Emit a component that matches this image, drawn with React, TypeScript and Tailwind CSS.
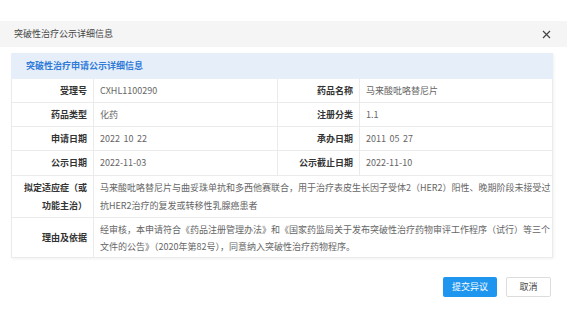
import React from "react";

const font = { fontFamily: '"Noto Sans CJK SC", "Noto Sans", sans-serif' };

function Label({ children }: { children: React.ReactNode }) {
  return (
    <div className="flex items-center justify-end pr-[6px] text-right font-semibold text-[#333] border-r border-[#ebebeb]">
      {children}
    </div>
  );
}

function Value({ children, border }: { children: React.ReactNode; border?: boolean }) {
  return (
    <div className={"flex items-center pl-[6px] text-[#666] [word-spacing:1.5px] " + (border ? "border-r border-[#ebebeb]" : "")}>
      {children}
    </div>
  );
}

export default function App() {
  return (
    <div className="w-[567px] h-[316px] bg-white pt-[21px] text-[9px]" style={font}>
      <div className="h-[26px] bg-[#f5f5f5] pl-[14px] pr-[16px] flex items-center justify-between">
        <span className="text-[#444] text-[9px]">突破性治疗公示详细信息</span>
        <svg width="9" height="9" viewBox="0 0 9 9">
          <path d="M1 1L8 8M8 1L1 8" stroke="#444" strokeWidth="1.2" />
        </svg>
      </div>
      <div className="ml-[11px] mr-[14px] mt-[6px] shadow-[1px_1px_3px_rgba(0,0,0,0.06)]">
        <div className="h-[26px] bg-[#e6eefa] flex items-center pl-[15px] text-[#2f7bd8] font-semibold text-[9px]">
          突破性治疗申请公示详细信息
        </div>
        <div className="border-l border-r border-[#ebebeb]">
          <div className="grid grid-cols-[82px_184px_82px_1fr] h-[24px] border-b border-[#ebebeb]">
            <Label>受理号</Label>
            <Value border>CXHL1100290</Value>
            <Label>药品名称</Label>
            <Value>马来酸吡咯替尼片</Value>
          </div>
          <div className="grid grid-cols-[82px_184px_82px_1fr] h-[24px] border-b border-[#ebebeb]">
            <Label>药品类型</Label>
            <Value border>化药</Value>
            <Label>注册分类</Label>
            <Value>1.1</Value>
          </div>
          <div className="grid grid-cols-[82px_184px_82px_1fr] h-[24px] border-b border-[#ebebeb]">
            <Label>申请日期</Label>
            <Value border>2022 10 22</Value>
            <Label>承办日期</Label>
            <Value>2011 05 27</Value>
          </div>
          <div className="grid grid-cols-[82px_184px_82px_1fr] h-[25px] border-b border-[#ebebeb]">
            <Label>公示日期</Label>
            <Value border>2022-11-03</Value>
            <Label>公示截止日期</Label>
            <Value>2022-11-10</Value>
          </div>
          <div className="grid grid-cols-[82px_1fr] h-[42px] border-b border-[#ebebeb] leading-[18px]">
            <Label>
              <span>
                拟定适应症（或
                <br />
                功能主治）
              </span>
            </Label>
            <div className="flex flex-col justify-center pl-[6px] text-[#666] whitespace-nowrap">
              <span>马来酸吡咯替尼片与曲妥珠单抗和多西他赛联合，用于治疗表皮生长因子受体2（HER2）阳性、晚期阶段未接受过</span>
              <span>抗HER2治疗的复发或转移性乳腺癌患者</span>
            </div>
          </div>
          <div className="grid grid-cols-[82px_1fr] h-[40px] border-b border-[#ebebeb] leading-[17px]">
            <Label>理由及依据</Label>
            <div className="flex flex-col justify-center pl-[6px] text-[#666] whitespace-nowrap">
              <span>经审核，本申请符合《药品注册管理办法》和《国家药监局关于发布突破性治疗药物审评工作程序（试行）等三个</span>
              <span>文件的公告》（2020年第82号），同意纳入突破性治疗药物程序。</span>
            </div>
          </div>
        </div>
      </div>
      <div className="flex justify-end gap-[9px] mt-[19px] pr-[16px]">
        <button className="w-[54px] h-[20px] bg-[#1e96ef] text-white rounded-[2px] text-[9px] flex items-center justify-center">
          提交异议
        </button>
        <button className="w-[45px] h-[20px] bg-white border border-[#dcdcdc] text-[#444] rounded-[2px] text-[9px] flex items-center justify-center">
          取消
        </button>
      </div>
    </div>
  );
}
